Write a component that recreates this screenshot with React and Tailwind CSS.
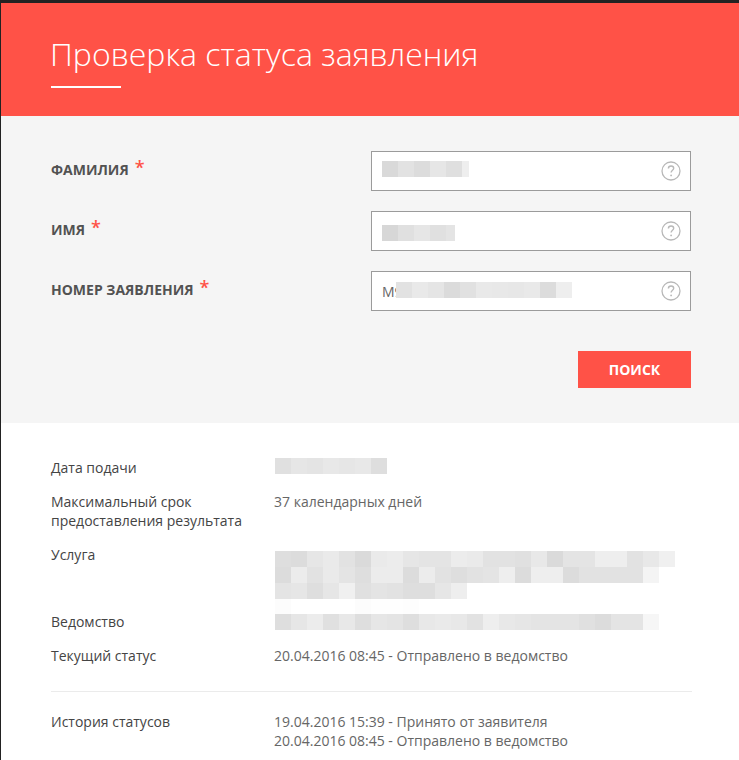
const g = (s) => s.split(" ").map((h) => "#" + h + h + h);

function Cells({ tones, lastWidth }) {
  const colors = g(tones);
  return (
    <div className="flex h-4">
      {colors.map((c, i) => (
        <div
          key={i}
          className="h-4 w-4 shrink-0"
          style={{ backgroundColor: c, width: lastWidth && i === colors.length - 1 ? lastWidth : undefined }}
        />
      ))}
    </div>
  );
}

function Help() {
  return (
    <svg width="20" height="20" viewBox="0 0 20 20" className="shrink-0" fill="none">
      <circle cx="10" cy="10" r="9" stroke="#b8b8b8" strokeWidth="1.3" />
      <path d="M7.4 7.6c0-1.6 1.2-2.6 2.7-2.6s2.6 1 2.6 2.3c0 2-2.6 2-2.6 4.3" stroke="#b8b8b8" strokeWidth="1.4" />
      <circle cx="10.1" cy="14.4" r="0.9" fill="#b8b8b8" />
    </svg>
  );
}

function Field({ label, children }) {
  return (
    <div className="flex h-10 items-start">
      <div className="w-[320px] pt-[7px] text-[14px] leading-[19px] font-bold text-[#525252]">
        {label}
        <span className="ml-[6px] align-[1px] text-[18px] leading-[19px] font-semibold text-[#ff5247]">*</span>
      </div>
      <div className="relative flex h-10 w-[320px] items-center justify-end border border-[#9b9b9b] bg-white pr-[9px]">
        {children}
        <Help />
      </div>
    </div>
  );
}

function Row({ label, children, className = "" }) {
  return (
    <div className={"grid grid-cols-[223px_1fr] " + className}>
      <div className="text-[#444]">{label}</div>
      <div className="text-[#666]">{children}</div>
    </div>
  );
}

export default function App() {
  return (
    <div className="h-[760px] overflow-hidden border-t-[3px] border-l border-[#222222] bg-white font-['Open_Sans',sans-serif]">
      <header className="h-[113px] bg-[#ff5247] pt-[29px] pl-[50px]">
        <h1 className="-ml-px text-[32px] leading-[43px] font-light text-white">Проверка статуса заявления</h1>
        <div className="mt-[11px] h-[2px] w-[70px] bg-white" />
      </header>

      <section className="flex h-[307px] flex-col gap-5 bg-[#f5f5f5] pt-[35px] pl-[50px]">
        <Field label="ФАМИЛИЯ">
          <div className="absolute top-[9px] left-[10px]">
            <Cells tones="d9 e2 dc e6 df ee" lastWidth="7px" />
          </div>
        </Field>
        <Field label="ИМЯ">
          <div className="absolute top-[13px] left-[10px]">
            <Cells tones="d7 e0 e6 e0 e4" lastWidth="9px" />
          </div>
        </Field>
        <Field label="НОМЕР ЗАЯВЛЕНИЯ">
          <span className="absolute top-[10px] left-[10px] text-[14px] leading-[19px] text-[#666]">M9</span>
          <div className="absolute top-[10px] left-[24px]">
            <Cells tones="e2 e9 e5 db e1 e9 e8 e7 e9 dc ee" />
          </div>
        </Field>
        <div className="mt-5 flex w-[640px] justify-end">
          <button className="h-[37px] w-[113px] bg-[#ff5247] text-[14px] font-bold text-white">ПОИСК</button>
        </div>
      </section>

      <section className="flex flex-col gap-[15px] pt-[35px] pr-[47px] pl-[50px] text-[14px] leading-[19px]">
        <Row label="Дата подачи">
          <div className="ml-px">
            <Cells tones="e0 e6 e4 e8 e6 e8 de" />
          </div>
        </Row>
        <Row label={<>Максимальный срок<br />предоставления результата</>}>37 календарных дней</Row>
        <Row label="Услуга" className="h-[52px]">
          <div className="relative">
            <div className="absolute top-[6px] left-[1px]">
              <Cells tones="de dc e6 ea e2 da ea ec e6 e4 e4 ec ea e2 e2 e0 e8 da e4 e4 ee ee e2 e8 f0" />
              <Cells tones="dc ec e2 ea e4 de ec ec dc ec e2 de e2 e4 ee dc ee ee dc e2 e2 e2 e2 f4" />
              <Cells tones="e4 e6 de e6 f0 e0 e4 e2 de de e6 ee" />
              <Cells tones="fc ff ff ff ff fc fe fe fd" />
            </div>
          </div>
        </Row>
        <Row label="Ведомство">
          <div className="relative">
            <div className="absolute top-[2px] left-[1px]">
              <Cells tones="de e6 ec e0 e8 de e6 e4 de e8 ea e8 e2 ee e8 e6 e4 e4 e4 e0 dc e4 e4 f6" />
            </div>
          </div>
        </Row>
        <Row label="Текущий статус">20.04.2016 08:45 - Отправлено в ведомство</Row>
        <div className="mt-[11px] h-px bg-[#ebebeb]" />
        <Row label="История статусов" className="mt-[5px]">
          19.04.2016 15:39 - Принято от заявителя
          <br />
          20.04.2016 08:45 - Отправлено в ведомство
        </Row>
      </section>
    </div>
  );
}
